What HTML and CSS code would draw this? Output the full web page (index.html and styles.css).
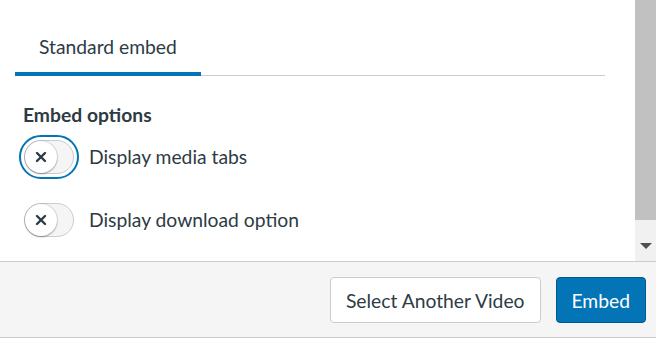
FILE: index.html
```html
<!DOCTYPE html>
<html>
    <head>
        <meta name="viewport" content="width=device-width, initial-scale=1" />
        <meta http-equiv="content-type" content="text/html; charset=utf-8" />
        <title>Embed video</title>
        <link rel="stylesheet" href="styles.css">
    </head>
    <body>
        <div class="modal">
            <div class="modal-body">
                <div class="content">
                    <div class="tabs">
                        <div class="tab active">Standard embed</div>
                    </div>
                    <div class="options">
                        <h3>Embed options</h3>
                        <label class="toggle-row">
                            <span class="toggle focused">
                                <span class="track">
                                    <span class="knob">
                                        <svg width="12" height="12" viewBox="0 0 12 12"><path d="M2 2 L10 10 M10 2 L2 10" stroke="#2d3b45" stroke-width="2.4" stroke-linecap="round"/></svg>
                                    </span>
                                </span>
                            </span>
                            <span class="label">Display media tabs</span>
                        </label>
                        <label class="toggle-row">
                            <span class="toggle">
                                <span class="track">
                                    <span class="knob">
                                        <svg width="12" height="12" viewBox="0 0 12 12"><path d="M2 2 L10 10 M10 2 L2 10" stroke="#2d3b45" stroke-width="2.4" stroke-linecap="round"/></svg>
                                    </span>
                                </span>
                            </span>
                            <span class="label">Display download option</span>
                        </label>
                    </div>
                </div>
                <div class="scrollbar">
                    <div class="thumb"></div>
                    <div class="arrow"></div>
                </div>
            </div>
            <div class="modal-footer">
                <button class="btn">Select Another Video</button>
                <button class="btn btn-primary">Embed</button>
            </div>
        </div>
    </body>
</html>
```

FILE: styles.css
```css
*{
    box-sizing: border-box;
    padding: 0;
    margin: 0;
}
body{
    background: #fff;
    color: #2d3b45;
    font-family: Lato, "Noto Sans", sans-serif;
    font-size: 19.3px;
    line-height: 1.25;
}
.modal{
    width: 656px;
    height: 338px;
    display: flex;
    flex-direction: column;
}
.modal-body{
    height: 261px;
    display: flex;
}
.content{
    flex: 1;
    padding: 0 30px 0 15px;
}
.tabs{
    margin-top: 30px;
    border-bottom: 1px solid #c7cdd1;
    display: flex;
}
.tab{
    width: 186px;
    padding: 5px 0 13px 24px;
    border-bottom: 4px solid #0374b5;
    margin-bottom: -1px;
}
.options{
    padding: 27px 0 0 8px;
}
.options h3{
    font-size: 19.3px;
    font-weight: bold;
    margin-bottom: 7px;
}
.toggle-row{
    display: flex;
    align-items: center;
    height: 46px;
    margin-bottom: 17px;
}
.toggle{
    display: inline-flex;
    padding: 3px;
    margin: 0 10px 0 -4px;
    border: 2px solid transparent;
    border-radius: 24px;
}
.toggle.focused{
    border-color: #0374b5;
}
.track{
    display: block;
    width: 50px;
    height: 34px;
    background: #f5f5f5;
    border: 1px solid #c7cdd1;
    border-radius: 17px;
}
.knob{
    display: flex;
    align-items: center;
    justify-content: center;
    width: 32px;
    height: 32px;
    background: #fff;
    border-radius: 50%;
    box-shadow: 0 1px 2px rgba(0,0,0,0.3), 0 0 0 1px rgba(0,0,0,0.08);
}
.label{
    font-size: 19.3px;
}
.scrollbar{
    width: 21px;
    background: #f1f1f1;
    display: flex;
    flex-direction: column;
    align-items: center;
}
.thumb{
    width: 21px;
    height: 220px;
    background: #c1c1c1;
}
.arrow{
    margin-top: 23px;
    width: 0;
    height: 0;
    border-left: 6px solid transparent;
    border-right: 6px solid transparent;
    border-top: 6px solid #505050;
}
.modal-footer{
    flex: 1;
    background: #f5f5f5;
    border-top: 1px solid #c7cdd1;
    border-bottom: 1px solid #c7cdd1;
    display: flex;
    justify-content: flex-end;
    align-items: flex-start;
    gap: 15px;
    padding: 15px 10px 0 0;
}
.btn{
    font-family: Lato, "Noto Sans", sans-serif;
    font-size: 19.3px;
    color: #2d3b45;
    background: #fff;
    border: 1px solid #c7cdd1;
    border-radius: 4px;
    height: 46px;
    padding: 0 15px;
}
.btn-primary{
    background: #0374b5;
    border-color: #03598b;
    color: #fff;
}
```
